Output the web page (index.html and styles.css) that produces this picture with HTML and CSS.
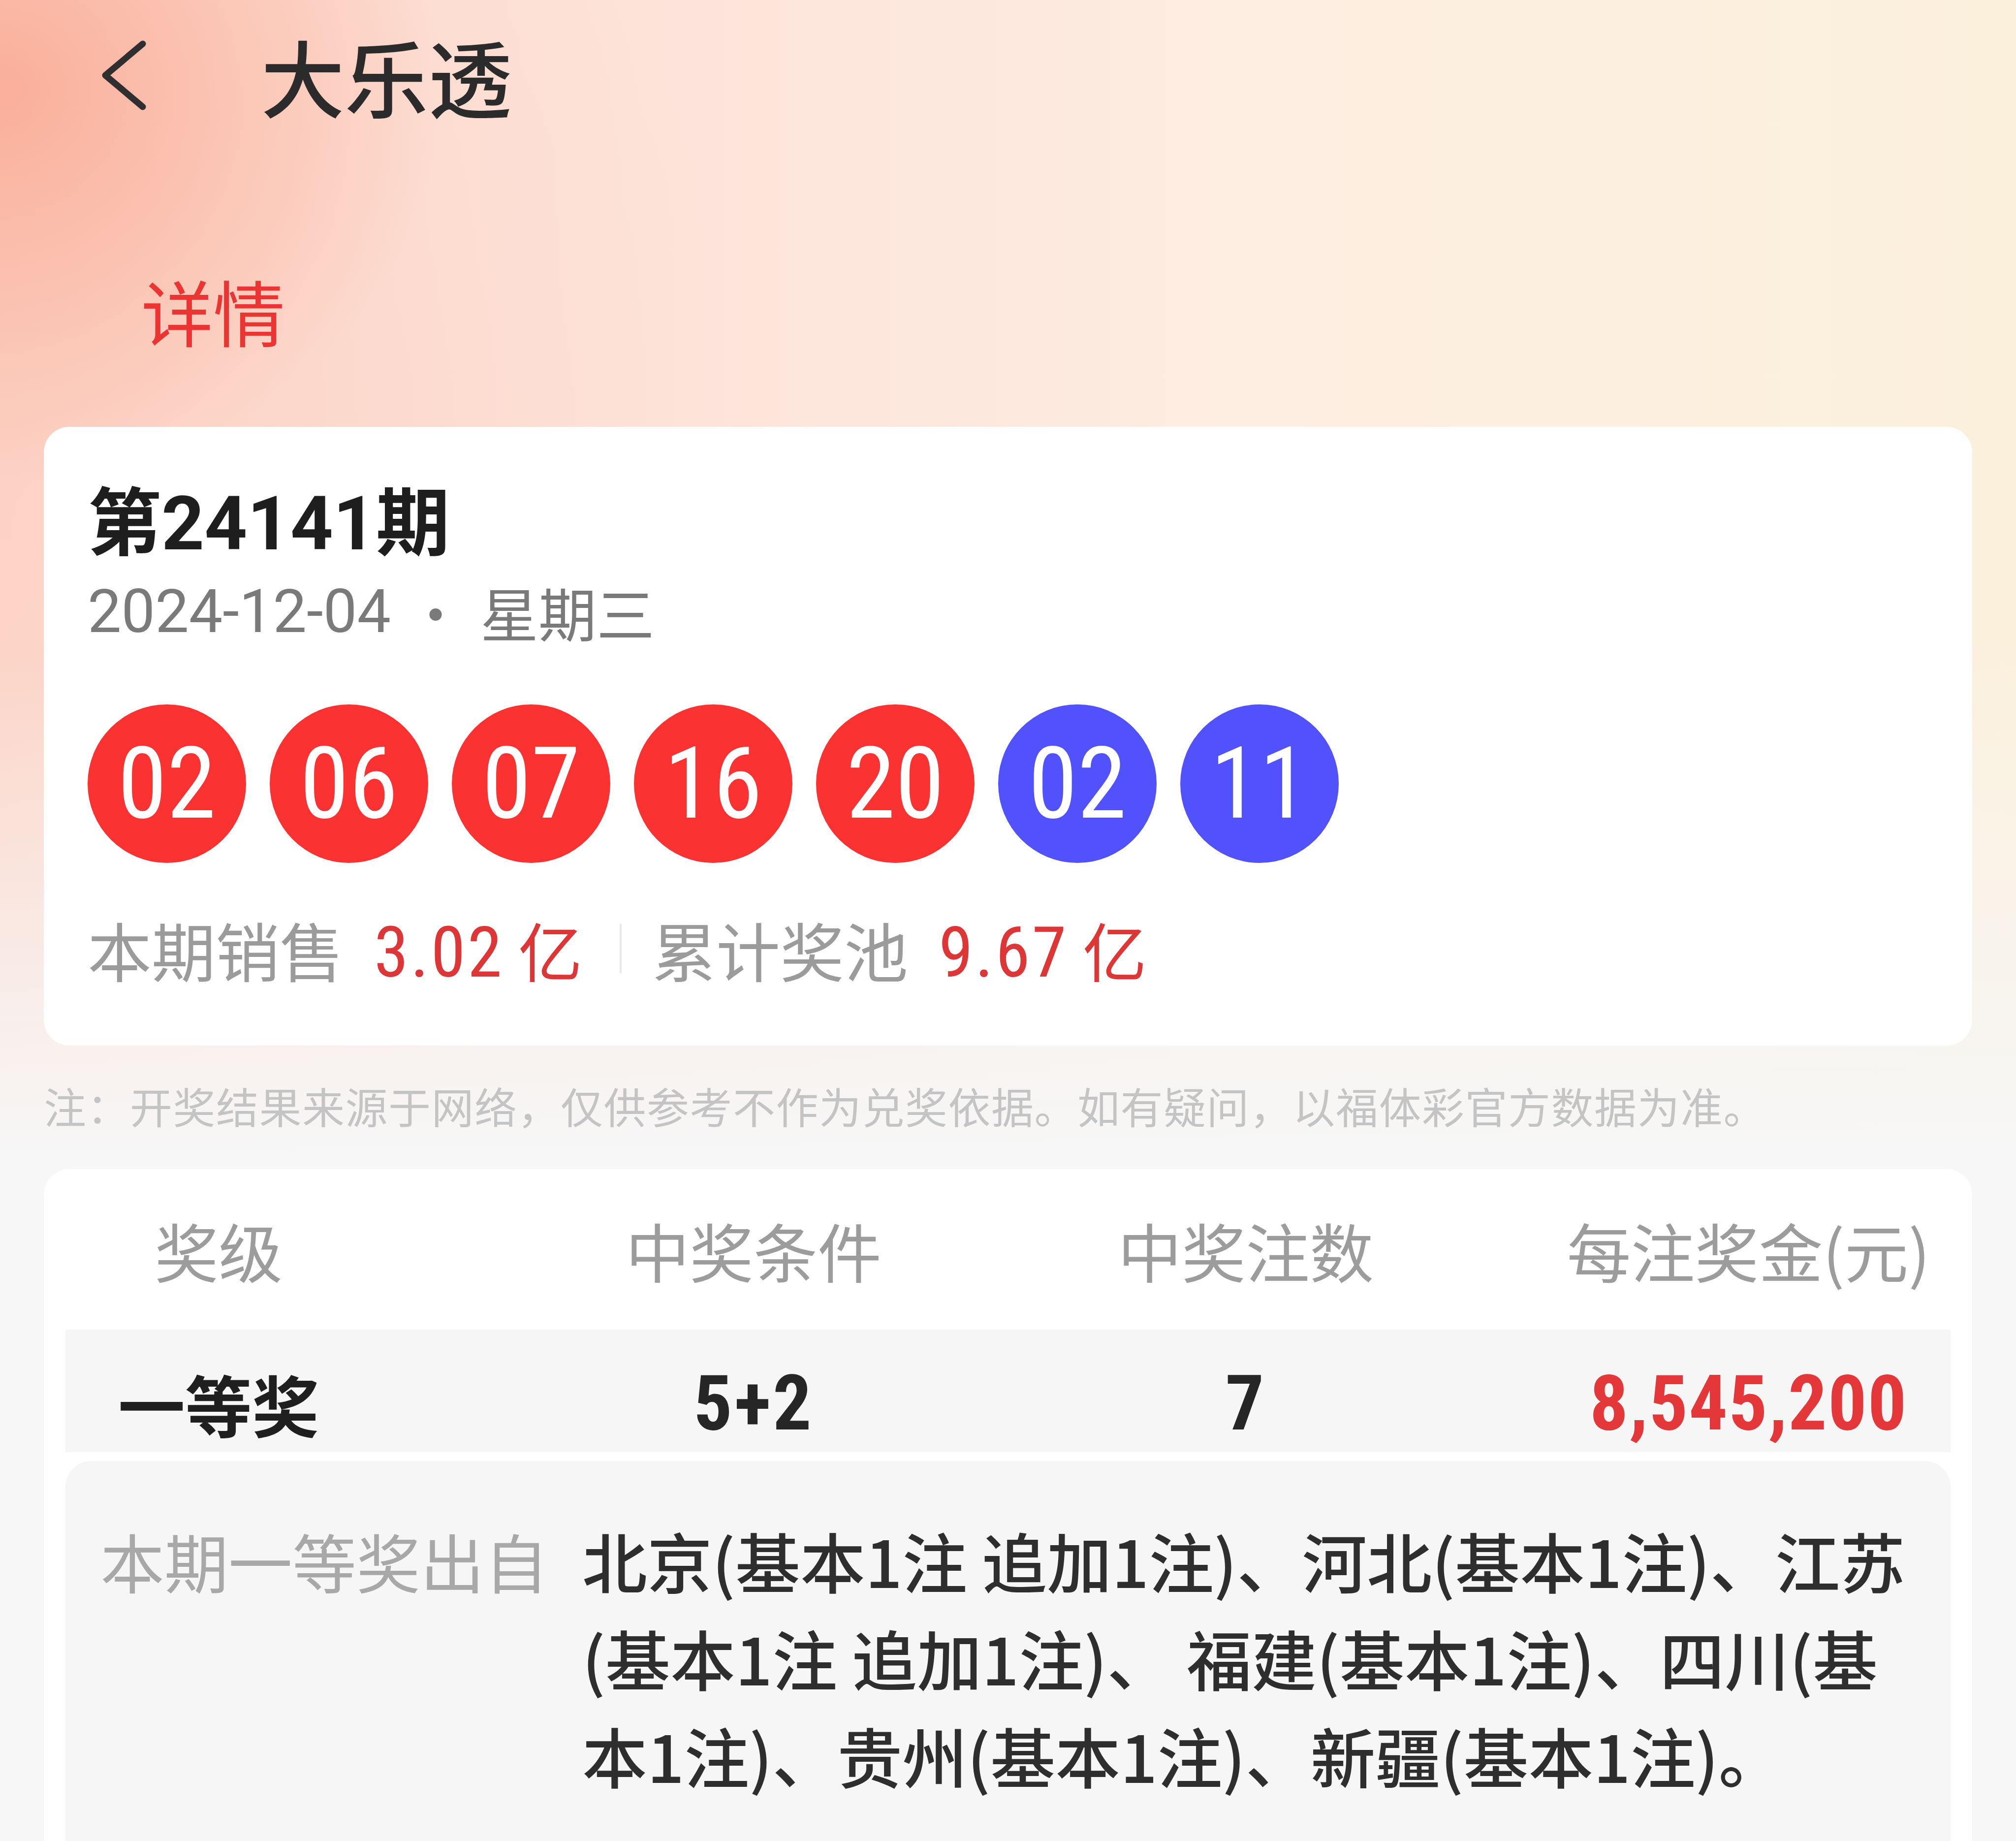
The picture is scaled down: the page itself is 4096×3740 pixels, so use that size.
FILE: index.html
```html
<!DOCTYPE html>
<html lang="zh-CN">
<head>
<meta charset="utf-8">
<title>大乐透 详情</title>
<link rel="stylesheet" href="styles.css">
</head>
<body>
<div class="page">
  <header class="topbar">
    <svg class="back" viewBox="0 0 96 144" aria-hidden="true">
      <polyline points="86,8 10,72 86,136" fill="none" stroke="#2f2f2f" stroke-width="13" stroke-linecap="round" stroke-linejoin="round"/>
    </svg>
    <h1 class="title">大乐透</h1>
  </header>

  <div class="tab">详情</div>

  <section class="card draw">
    <div class="issue">第<span class="issue-num">24141</span>期</div>
    <div class="date"><span class="date-num">2024-12-04</span><span class="dot">·</span><span>星期三</span></div>
    <div class="balls">
      <div class="ball red">02</div>
      <div class="ball red">06</div>
      <div class="ball red">07</div>
      <div class="ball red">16</div>
      <div class="ball red">20</div>
      <div class="ball blue">02</div>
      <div class="ball blue">11</div>
    </div>
    <div class="stats">
      <span class="stat-label">本期销售</span>
      <span class="stat-value"><span class="digits">3.02</span> 亿</span>
      <span class="divider"></span>
      <span class="stat-label">累计奖池</span>
      <span class="stat-value"><span class="digits">9.67</span> 亿</span>
    </div>
  </section>

  <p class="note">注：开奖结果来源于网络，仅供参考不作为兑奖依据。如有疑问，以福体彩官方数据为准。</p>

  <section class="card prizes">
    <div class="row head">
      <div>奖级</div>
      <div>中奖条件</div>
      <div>中奖注数</div>
      <div>每注奖金(元)</div>
    </div>
    <div class="row first">
      <div class="level">一等奖</div>
      <div class="val">5+2</div>
      <div class="val">7</div>
      <div class="val money">8,545,200</div>
    </div>
    <div class="origin">
      <div class="origin-label">本期一等奖出自</div>
      <div class="origin-text">北京(基本1注 追加1注)、河北(基本1注)、江苏(基本1注 追加1注)、 福建(基本1注)、四川(基本1注)、贵州(基本1注)、新疆(基本1注)。</div>
    </div>
  </section>
</div>
</body>
</html>
```

FILE: styles.css
```css
html, body {
  margin: 0;
  padding: 0;
}

body {
  width: 4096px;
  min-height: 3740px;
  overflow: hidden;
  font-family: "Noto Sans CJK SC", "Noto Sans", sans-serif;
  background-color: #f7f7f7;
  background-image:
    linear-gradient(180deg, rgba(247, 247, 247, 0) 0px, rgba(247, 247, 247, 0) 1300px, #f7f7f7 2350px),
    radial-gradient(ellipse 900px 800px at 0px 180px, rgba(248, 150, 124, 0.6), rgba(248, 150, 124, 0) 100%),
    radial-gradient(ellipse 1500px 1700px at 0px 900px, rgba(251, 200, 186, 0.45), rgba(251, 200, 186, 0) 100%),
    linear-gradient(90deg, #fcd9cc 0%, #fde4da 35%, #fdeee1 65%, #fbf0dc 100%);
  background-repeat: no-repeat;
}

.page {
  width: 4096px;
}

/* ---------- top bar ---------- */
.topbar {
  display: flex;
  align-items: center;
  height: 306px;
  padding-left: 204px;
}

.back {
  width: 96px;
  height: 144px;
  flex: none;
}

.title {
  margin: 0 0 0 230px;
  font-size: 170px;
  line-height: 1;
  font-weight: 500;
  color: #2b2b2b;
}

.tab {
  margin: 251px 0 0 287px;
  height: 146px;
  font-size: 146px;
  line-height: 146px;
  color: #ec3432;
}

/* ---------- cards ---------- */
.card {
  background: #fff;
  border-radius: 52px;
}

.draw {
  margin: 164px 89px 0;
  padding: 112px 89px 122px;
}

.issue {
  font-size: 150px;
  line-height: 144px;
  font-weight: 700;
  color: #1e1e1e;
}

.issue-num {
  font-family: Roboto, "Noto Sans CJK SC", sans-serif;
  font-size: 152px;
  font-weight: 700;
}

.date {
  display: flex;
  align-items: center;
  margin-top: 41px;
  height: 130px;
  font-size: 118px;
  color: #7a7a7a;
}

.date-num {
  font-family: Roboto, "Noto Sans CJK SC", sans-serif;
  font-size: 122px;
}

.dot {
  margin: 0 32px;
}

.balls {
  display: flex;
  gap: 48px;
  margin-top: 124px;
}

.ball {
  width: 322px;
  height: 322px;
  border-radius: 50%;
  display: flex;
  align-items: center;
  justify-content: center;
  color: #fff;
  font-family: "Liberation Sans Narrow", "Roboto Condensed", "DejaVu Sans Condensed", Roboto, sans-serif;
  font-size: 202px;
  line-height: 1;
}

.ball.red {
  background: #fa3232;
}

.ball.blue {
  background: #5152fc;
}

.stats {
  display: flex;
  align-items: center;
  margin-top: 99px;
  height: 150px;
  font-size: 130px;
  color: #9b9b9b;
}

.stat-value {
  margin-left: 62px;
  color: #dd3636;
}

.stat-value .digits {
  font-family: "Liberation Sans Narrow", "Roboto Condensed", Roboto, sans-serif;
  font-size: 142px;
  letter-spacing: 4px;
}

.divider {
  width: 4px;
  height: 100px;
  margin: 0 62px 0 76px;
  background: #e8e8e8;
}

/* ---------- note ---------- */
.note {
  margin: 72px 89px 0;
  font-size: 86px;
  line-height: 100px;
  letter-spacing: 1.5px;
  color: #c4c4c4;
  white-space: nowrap;
}

/* ---------- prize table ---------- */
.prizes {
  margin: 79px 89px 0;
  padding: 0 44px 44px;
}

.row {
  display: grid;
  grid-template-columns: 622px 1552px 448px 1207px;
  align-items: center;
}

.row > div {
  display: flex;
  justify-content: center;
  white-space: nowrap;
}

.row > div:last-child {
  padding-left: 388px;
}

.head {
  height: 326px;
  font-size: 130px;
  color: #9c9c9c;
}

.first {
  box-sizing: border-box;
  height: 249px;
  padding-top: 50px;
  background: #f6f6f6;
}

.level {
  font-size: 136px;
  font-weight: 700;
  color: #1f1f1f;
}

.val {
  font-family: "Liberation Sans Narrow", "Roboto Condensed", Roboto, sans-serif;
  font-size: 156px;
  font-weight: 700;
  color: #262626;
  letter-spacing: 4px;
}

.val.money {
  color: #e3373a;
  letter-spacing: 2px;
}

.origin {
  display: flex;
  gap: 69px;
  margin-top: 18px;
  padding: 102px 0 240px 71px;
  background: #f6f6f6;
  border-radius: 52px;
}

.origin-label {
  flex: none;
  font-size: 130px;
  line-height: 198px;
  color: #a8a8a8;
  white-space: nowrap;
}

.origin-text {
  width: 2740px;
  font-family: "Liberation Sans Narrow", "Noto Sans CJK SC", sans-serif;
  font-size: 132px;
  line-height: 198px;
  font-weight: 500;
  color: #2e2e2e;
}
```
